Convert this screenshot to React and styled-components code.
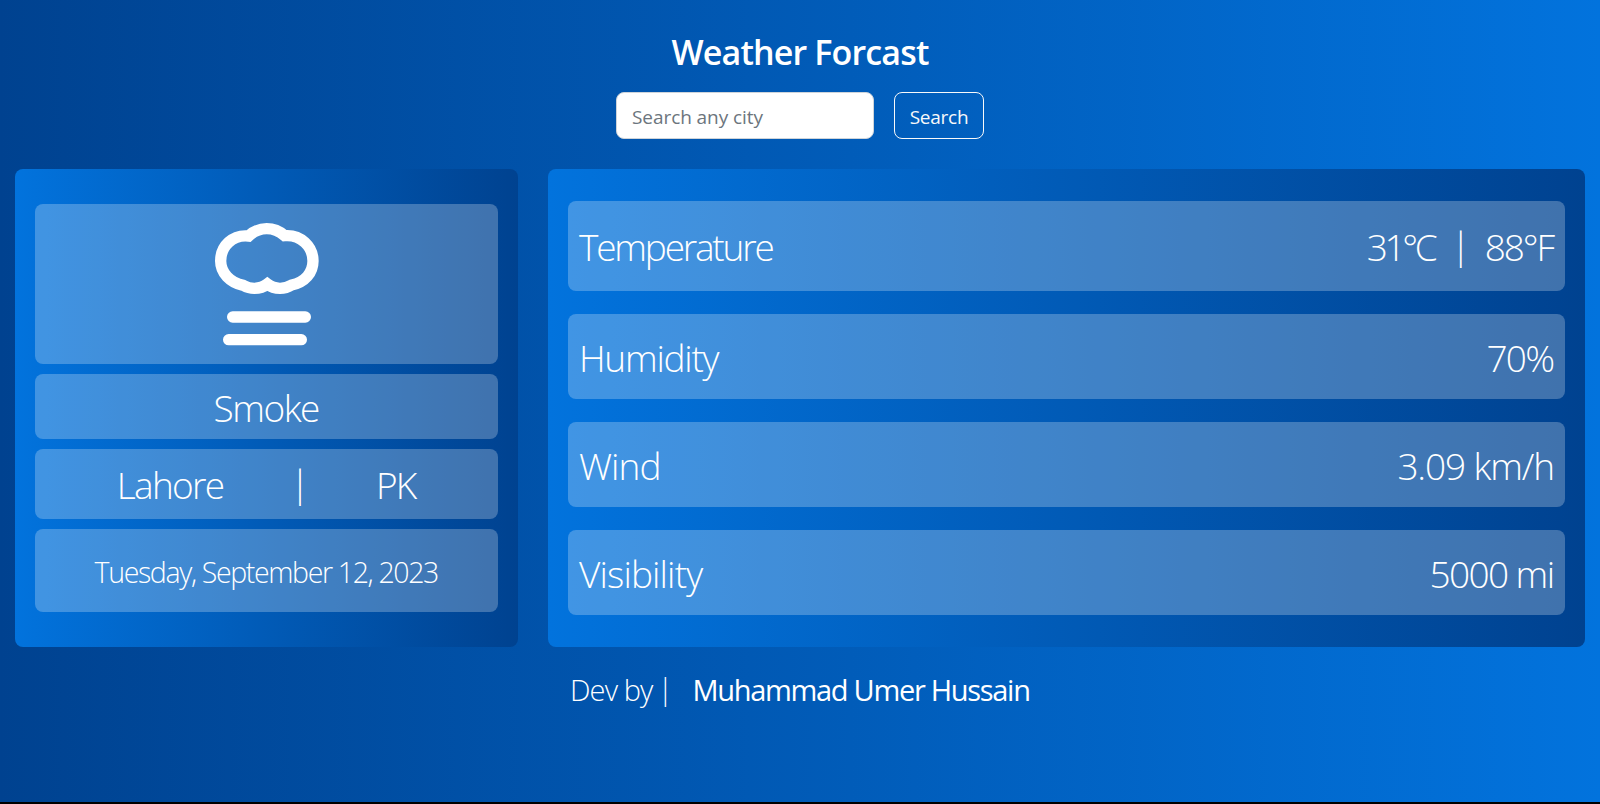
import React from "react";
import styled, { createGlobalStyle } from "styled-components";

const GlobalStyle = createGlobalStyle`
  * { box-sizing: border-box; }
  html, body { margin: 0; background: #000; }
  body { font-family: "Open Sans", "Noto Sans", sans-serif; color: #fff; }
`;

const Page = styled.main`
  height: 802px;
  padding: 31px 15px 0;
  background: linear-gradient(90deg, #004290, #0273dd);
  display: flex;
  flex-direction: column;
`;

const Header = styled.header`
  height: 138px;
  display: flex;
  flex-direction: column;
  align-items: center;
`;

const Title = styled.h1`
  margin: 0;
  font-size: 34px;
  line-height: 42px;
  font-weight: 600;
  letter-spacing: -0.85px;
`;

const SearchForm = styled.form`
  margin-top: 19px;
  display: flex;
  gap: 20px;
`;

const SearchInput = styled.input`
  width: 258px;
  height: 47px;
  padding: 3px 15px 0;
  border: 1px solid #ced4da;
  border-radius: 8px;
  background: #fff;
  font: 400 19px "Open Sans", sans-serif;
  letter-spacing: -0.07px;
  &::placeholder { color: #6c757d; opacity: 1; }
`;

const SearchButton = styled.button`
  width: 90px;
  height: 47px;
  padding: 3px 0 0;
  border: 1px solid #f8f9fa;
  border-radius: 8px;
  background: transparent;
  color: #f8f9fa;
  font: 400 19px "Open Sans", sans-serif;
  letter-spacing: -0.25px;
`;

const Panels = styled.div`
  display: grid;
  grid-template-columns: 503px 1037px;
  gap: 30px;
  height: 478px;
`;

const Panel = styled.section`
  display: flex;
  flex-direction: column;
  gap: ${(p) => p.$gap}px;
  padding: ${(p) => p.$top}px 20px;
  border-radius: 8px;
  background: linear-gradient(90deg, #0273dd, #004290);
`;

const Card = styled.div`
  height: ${(p) => p.$height}px;
  display: flex;
  align-items: center;
  justify-content: ${(p) => p.$justify || "center"};
  padding: 0 ${(p) => p.$pad || 0}px ${(p) => p.$bottom || 0}px;
  border-radius: 8px;
  background: rgba(255, 255, 255, 0.25);
`;

const Text = styled.span`
  padding-top: 2px;
  margin-right: ${(p) => -1 - p.$track}px;
  font-weight: ${(p) => p.$weight || 300};
  font-size: ${(p) => p.$size || 37}px;
  line-height: 48px;
  letter-spacing: ${(p) => p.$track}px;
  white-space: pre;
`;

const Bar = styled.span`
  width: 20px;
  margin: 0 ${(p) => p.$right}px ${(p) => p.$lift}px ${(p) => p.$left}px;
  text-align: center;
  font-weight: 300;
  font-size: ${(p) => p.$size || 37}px;
  line-height: 48px;
`;

const Reading = styled.div`
  display: flex;
  align-items: center;
`;

const Footer = styled.footer`
  margin-top: 17px;
  display: flex;
  justify-content: center;
  align-items: center;
`;

const SmokeIcon = () => (
  <svg width="110" height="130" viewBox="36 54 330 390" fill="none" stroke="#fff">
    <path
      strokeWidth="34"
      d="M146 108Q170 86 200 86Q230 86 254 107C302 103 339 139 339 183C339 218 315 247 275 255Q259 265 240 265Q218 265 202 252Q186 265 163 265Q146 265 130 256C90 248 62 218 62 183C62 138 98 103 146 108Z"
    />
    <path strokeWidth="34" strokeLinecap="round" d="M98 351H316M86 419H304" />
  </svg>
);

const READINGS = [
  { label: "Humidity", labelTrack: -1.25, value: "70%", valueTrack: -1.8 },
  { label: "Wind", labelTrack: -0.9, value: "3.09 km/h", valueTrack: -1.15 },
  { label: "Visibility", labelTrack: -0.85, value: "5000 mi", valueTrack: -1.6 },
];

export default function App() {
  return (
    <>
      <GlobalStyle />
      <Page>
        <Header>
          <Title>Weather Forcast</Title>
          <SearchForm onSubmit={(e) => e.preventDefault()}>
            <SearchInput placeholder="Search any city" />
            <SearchButton>Search</SearchButton>
          </SearchForm>
        </Header>
        <Panels>
          <Panel $gap={10} $top={35}>
            <Card $height={160} $bottom={2}><SmokeIcon /></Card>
            <Card $height={65}><Text $track={-1.5}>Smoke</Text></Card>
            <Card $height={70}>
              <Text $track={-1.7}>Lahore</Text>
              <Bar $left={66} $right={66} $lift={2}>|</Bar>
              <Text $track={-2}>PK</Text>
            </Card>
            <Card $height={83}>
              <Text $size={28.5} $track={-1.36}>Tuesday, September 12, 2023</Text>
            </Card>
          </Panel>
          <Panel $gap={23} $top={32}>
            <Card $height={90} $justify="space-between" $pad={11}>
              <Text $track={-2.2}>Temperature</Text>
              <Reading>
                <Text $track={-3.4}>31°C</Text>
                <Bar $left={14} $right={14} $lift={2}>|</Bar>
                <Text $track={-2.1}>88°F</Text>
              </Reading>
            </Card>
            {READINGS.map((r) => (
              <Card key={r.label} $height={85} $justify="space-between" $pad={11}>
                <Text $track={r.labelTrack}>{r.label}</Text>
                <Text $track={r.valueTrack}>{r.value}</Text>
              </Card>
            ))}
          </Panel>
        </Panels>
        <Footer>
          <Text $size={29} $track={-0.9}>Dev by</Text>
          <Bar $size={29} $left={3} $right={17} $lift={0}>|</Bar>
          <Text $size={29} $weight={500} $track={-1.3}>Muhammad Umer Hussain</Text>
        </Footer>
      </Page>
    </>
  );
}
